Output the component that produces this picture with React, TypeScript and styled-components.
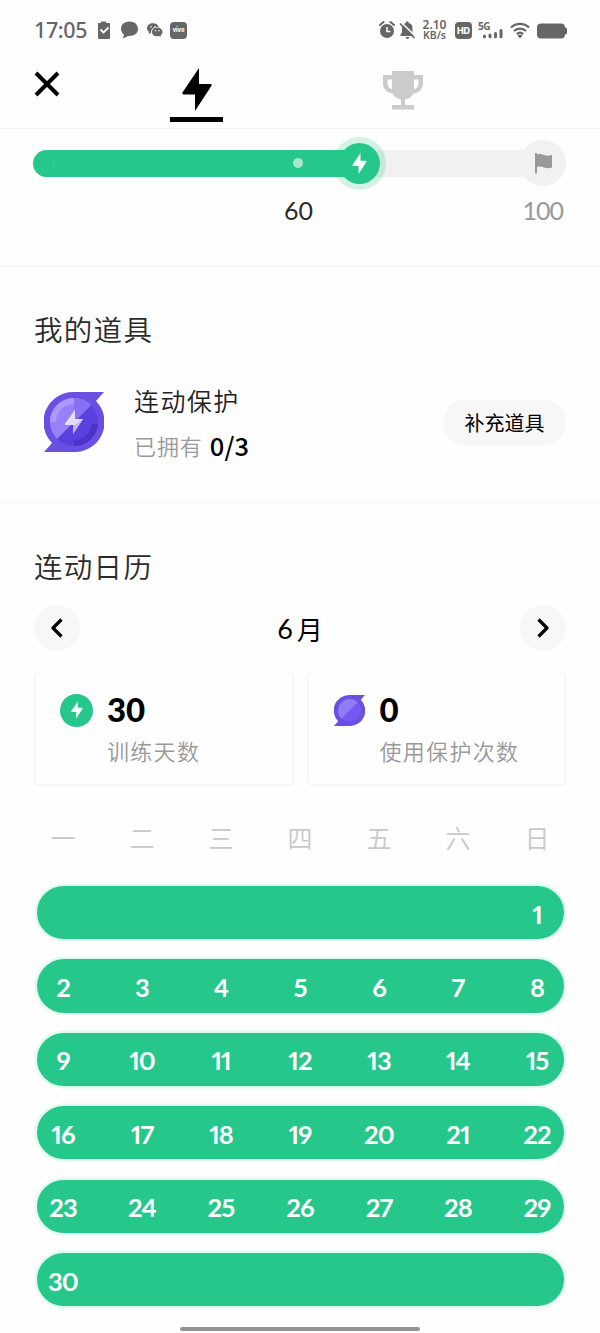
import React from 'react';
import styled, { createGlobalStyle } from 'styled-components';

const GREEN = '#26c78b';
const cjk = "'Noto Sans CJK SC', sans-serif";
const cjkSoft = "'Noto Sans CJK SC DemiLight', 'Noto Sans CJK SC', sans-serif";
const latin = "Lato, 'Noto Sans CJK SC', sans-serif";

const GlobalStyle = createGlobalStyle`
  * { box-sizing: border-box; }
  body { margin: 0; background: #fefefe; font-family: ${cjk}; color: #2b2b2b; }
  svg { display: block; flex: none; }
`;

const Screen = styled.main`
  width: 600px;
  height: 1333px;
  display: flex;
  flex-direction: column;
  overflow: hidden;
  background: #fefefe;
`;

const StatusBar = styled.header`
  height: 60px;
  padding: 0 33px 0 34px;
  display: flex;
  align-items: center;
  justify-content: space-between;
  color: #666;
`;
const StatusGroup = styled.div`
  display: flex;
  align-items: center;
`;
const Clock = styled.span`
  width: 62px;
  font: 500 21.5px/30px 'Noto Sans', sans-serif;
  letter-spacing: -0.4px;
  white-space: nowrap;
`;
const Speed = styled.div`
  width: 27px;
  margin: 0 7px 0 5px;
  display: flex;
  flex-direction: column;
  align-items: center;
  font: 600 11px/11px 'Noto Sans', sans-serif;
  white-space: nowrap;
`;
const SpeedValue = styled.span`
  height: 11px;
  font-size: 12px;
`;
const SpeedUnit = styled.span`
  height: 11px;
  font-size: 10.5px;
`;
const Badge = styled.span<{ $font: number }>`
  width: 17px;
  height: 17px;
  border-radius: 4px;
  background: #666;
  color: #fff;
  display: flex;
  align-items: center;
  justify-content: center;
  font: 800 ${p => p.$font}px/17px Inter, sans-serif;
`;
const Signal = styled.div`
  width: 26px;
  height: 18px;
  margin: 0 6px 0 6px;
  display: flex;
`;
const NetworkLabel = styled.span`
  width: 5px;
  font: 700 10px/10px 'Noto Sans', sans-serif;
  letter-spacing: -0.4px;
  white-space: nowrap;
`;
const BatterySlot = styled.div`
  margin: 1px 0 0 7px;
`;

const TabBar = styled.nav`
  height: 69px;
  padding-left: 34px;
  display: flex;
  border-bottom: 1.5px solid #f3f3f3;
`;
const CloseButton = styled.button`
  width: 26px;
  height: 26px;
  margin: 11px 60px 0 0;
  padding: 0;
  border: 0;
  background: none;
`;
const Tab = styled.div<{ $active?: boolean }>`
  width: 153px;
  height: 62px;
  display: flex;
  flex-direction: column;
  align-items: center;
  justify-content: space-between;
  padding-top: ${p => (p.$active ? 8 : 11)}px;
`;
const TabSpacer = styled.span`
  width: 53px;
`;
const Underline = styled.span`
  width: 53px;
  height: 5px;
  background: #000;
`;

const ProgressSection = styled.section`
  height: 138px;
  padding: 8px 34px 0 33px;
  border-bottom: 2px solid #f7f7f7;
`;
const ProgressRow = styled.div`
  height: 52px;
  display: flex;
  align-items: center;
`;
const Fill = styled.div`
  width: 326px;
  height: 27px;
  flex: none;
  margin-right: -26px;
  padding-right: 56px;
  border-radius: 14px 0 0 14px;
  background: ${GREEN};
  display: flex;
  align-items: center;
  justify-content: space-between;
`;
const FillSeam = styled.span`
  width: 27px;
  height: 27px;
  margin-left: 20px;
  border-radius: 50%;
  border-left: 1px solid #39cc95;
`;
const Milestone = styled.span`
  width: 10px;
  height: 10px;
  border-radius: 50%;
  background: #a4e8ce;
`;
const Knob = styled.div`
  z-index: 1;
  width: 53px;
  height: 53px;
  flex: none;
  border-radius: 50%;
  border: 6.5px solid rgba(38, 196, 137, 0.2);
  background: ${GREEN};
  background-clip: padding-box;
  display: flex;
  align-items: center;
  justify-content: center;
`;
const Track = styled.div`
  flex: 1;
  height: 27px;
  margin: 0 -4px 0 -27px;
  background: #f1f1f1;
`;
const Goal = styled.div`
  width: 46px;
  height: 46px;
  flex: none;
  border-radius: 50%;
  background: #f1f1f1;
  display: flex;
  align-items: center;
  justify-content: center;
`;
const ProgressLabels = styled.div`
  display: flex;
  justify-content: space-between;
  padding: 6px 3px 0 251px;
  font: 400 25px/30px ${latin};
  color: #2b2b2b;
`;
const GoalLabel = styled.span`
  color: #999;
  letter-spacing: -1px;
`;

const Title = styled.h2`
  margin: 0;
  font: 400 28.5px/40px ${cjkSoft};
  letter-spacing: 1.3px;
  color: #2b2b2b;
`;
const PropsSection = styled.section`
  height: 238px;
  padding: 42px 34px 0;
  border-bottom: 4px solid #fafafa;
`;
const PropRow = styled.div`
  display: flex;
  align-items: center;
  margin-top: 29px;
  height: 88px;
  padding-left: 10px;
`;
const PropInfo = styled.div`
  flex: 1;
  padding: 4px 0 0 30px;
`;
const PropName = styled.div`
  font: 400 25px/42px ${cjkSoft};
  letter-spacing: 1.4px;
  color: #222;
`;
const PropCount = styled.div`
  display: flex;
  align-items: center;
  font: 400 22px/48px ${cjkSoft};
  letter-spacing: 0.9px;
  color: #999;
`;
const CountValue = styled.span`
  margin-left: 7px;
  font: 500 25.5px/48px ${cjk};
  letter-spacing: 0.2px;
  color: #000;
`;
const RefillButton = styled.button`
  width: 123px;
  height: 47px;
  padding: 0;
  border: 0;
  border-radius: 24px;
  background: #f7f7f7;
  font: 400 20px/47px ${cjk};
  color: #000;
`;

const CalendarSection = styled.section`
  padding: 41px 34px 0;
  flex: 1;
`;
const MonthNav = styled.div`
  display: flex;
  align-items: center;
  justify-content: space-between;
  margin-top: 19px;
  height: 46px;
`;
const NavButton = styled.button`
  width: 46px;
  height: 46px;
  padding: 0;
  border: 0;
  border-radius: 50%;
  background: #f7f7f7;
  display: flex;
  align-items: center;
  justify-content: center;
`;
const Month = styled.div`
  display: flex;
  align-items: center;
  gap: 4px;
  padding-top: 2px;
  font: 400 26px/40px ${cjk};
  color: #000;
`;
const MonthNumber = styled.span`
  font: 400 27px/40px ${latin};
`;
const Stats = styled.div`
  display: grid;
  grid-template-columns: 1fr 1fr;
  gap: 13px;
  margin-top: 20px;
`;
const StatCard = styled.div`
  height: 115px;
  padding: 17px 0 0 24px;
  border: 2px solid #f7f7f7;
  border-radius: 5px;
  display: grid;
  grid-template-columns: 33px 1fr;
  grid-template-rows: 40px 42px;
  column-gap: 14px;
  align-items: center;
`;
const StatIcon = styled.div<{ $round?: boolean }>`
  width: 33px;
  height: 33px;
  border-radius: ${p => (p.$round ? '50%' : '0')};
  background: ${p => (p.$round ? GREEN : 'none')};
  display: flex;
  align-items: center;
  justify-content: center;
`;
const StatValue = styled.div`
  font: 900 33px/38px ${latin};
  padding-bottom: 2px;
  letter-spacing: -0.2px;
  color: #000;
`;
const StatLabel = styled.div`
  grid-column: 2;
  font: 400 22px/40px ${cjkSoft};
  padding-bottom: 2px;
  letter-spacing: 1.3px;
  color: #999;
`;

const Weekdays = styled.div`
  display: grid;
  grid-template-columns: repeat(7, 79px);
  margin: 31px -10px 0;
  justify-content: center;
  text-align: center;
  font: 400 25px/40px ${cjkSoft};
  color: #c8c8c8;
`;
const Weeks = styled.div`
  display: flex;
  flex-direction: column;
  gap: 20.1px;
  margin: 29px -10px 0;
`;
const Week = styled.div`
  height: 53.3px;
  margin: 0 12.5px;
  border-radius: 27px;
  background: ${GREEN};
  box-shadow: 0 0 1px 2.5px #dffaf0;
  display: grid;
  grid-template-columns: repeat(7, 79px);
  justify-content: center;
  align-items: center;
  text-align: center;
  font: 700 25.5px/30px ${latin};
  font-variant-numeric: proportional-nums;
  letter-spacing: -0.9px;
  color: #fff;
`;
const Day = styled.span`
  padding-top: 2px;
`;
const HomeIndicator = styled.div`
  width: 240px;
  height: 4px;
  margin: 0 auto 2px;
  border-radius: 2px;
  background: #929292;
`;

const Bolt = ({ w, h, color }: { w: number; h: number; color: string }) => (
  <svg width={w} height={h} viewBox="0 0 30 43" fill={color}>
    <path d="M17 0 .8 24q-1.300 2.500 1.200 2.500h11V43L29.300 18q1.200-2-1.300-2H17Z" />
  </svg>
);

const ShieldIcon = ({ size, bolt }: { size: number; bolt?: boolean }) => (
  <svg width={size} height={size} viewBox="0 0 60 60">
    <path fill="#6a50e2" d="M30 0h30l-8 9a30 30 0 0 1-22 51H0l8-9A30 30 0 0 1 30 0Z" />
    <circle cx="30" cy="30" r={bolt ? 24 : 22} fill={bolt ? '#5a40de' : '#7358f2'} />
    {bolt ? (
      <>
        <path fill="#9780f8" d="M13 47A24 24 0 0 1 47 13Z" />
        <path fill="#8870f2" d="M30 6a24 24 0 0 1 17 7L30 30Z" />
        <path fill="#ad99fb" d="M6 30A24 24 0 0 1 30 6v6a18 18 0 0 0-18 18Z" />
        <path fill="#4a33c8" d="M54 32a24 24 0 0 1-24 22v-6a18 18 0 0 0 18-16Z" />
        <path fill="#fff" d="M31 18 21 32q0 1 1 1h9Z" />
        <path fill="#e3dafc" d="M31 18v9h8L29 42v-9h-7Z" />
        <path fill="#c2b4f7" d="M31 33h-2v9l10-15Z" />
      </>
    ) : (
      <path fill="#907bf9" d="M14.4 45.6A22 22 0 0 1 45.6 14.4Z" />
    )}
  </svg>
);

const Chevron = ({ right }: { right?: boolean }) => (
  <svg width="14" height="20" viewBox="0 0 14 20" fill="none" stroke="#000" strokeWidth="3.200" strokeLinejoin="round">
    <path d={right ? 'M2.500 1.500 11 10l-8.500 8.500' : 'M11.500 1.500 3 10l8.500 8.500'} />
  </svg>
);

const NoticeIcons = () => (
  <svg width="74" height="20" viewBox="0 0 74 20" fill="#666">
    <path d="M2 3h3V1.500h5V3h3q1 0 1 1v14q0 1-1 1H3q-1 0-1-1V4Z" />
    <path d="M4.500 9.500 7.500 12.500 12.500 7.500" fill="none" stroke="#fff" strokeWidth="1.800" />
    <path d="M33.500 1.500c-5 0-8.500 3-8.500 7.300 0 2.500 1.200 4.500 3 5.700 0 1.500-.8 3-1.800 3.700 2.500 0 4-.8 5.500-2.200h1.800c5 0 8.500-3 8.500-7.200s-3.500-7.300-8.500-7.300Z" />
    <path d="M57 3.200c-3.500 0-6 2.100-6 4.900 0 1.700.8 3 2.100 3.900l-.5 2.100 2.300-1.200 2 .3c3.500 0 6-2.300 6-5s-2.500-5-5.900-5Z" />
    <ellipse cx="61.200" cy="12" rx="6.200" ry="5.300" fill="#fefefe" />
    <path d="M61.200 7.500c-3 0-5.200 2-5.200 4.400s2.200 4.400 5.200 4.400l1.800-.3 2 1-.4-1.900c1.200-.8 1.900-1.900 1.900-3.200 0-2.400-2.300-4.400-5.300-4.400Z" />
    <g fill="#fefefe">
      <circle cx="55" cy="6.800" r=".8" />
      <circle cx="59" cy="6.800" r=".8" />
      <circle cx="59.500" cy="10.700" r=".7" />
      <circle cx="63" cy="10.700" r=".7" />
    </g>
  </svg>
);

const AlarmIcons = () => (
  <svg width="37" height="20" viewBox="0 0 37 20">
    <circle cx="8" cy="11" r="7" fill="#666" />
    <path d="M1 5 4.500 2M11.500 2 15 5" stroke="#666" strokeWidth="2" strokeLinecap="round" />
    <path d="M8 7v4.500h3.500" stroke="#fff" strokeWidth="1.500" fill="none" />
    <path fill="#666" d="M21.500 16v-1.500l1.500-2V8c0-3 2-4.500 4-5V1.500h2.500V3c2.500.5 4 2 4 5v4.500l1.500 2V16ZM26.500 17h4q-.5 2-2 2t-2-2Z" />
    <path d="M22.500 2.500 37 17" stroke="#fefefe" strokeWidth="1.600" />
    <path d="M21 3.500 35.500 18" stroke="#666" strokeWidth="1.600" />
  </svg>
);

const Bars = () => (
  <svg width="20" height="18" viewBox="0 0 20 18" stroke="#666" strokeWidth="3" strokeLinecap="round">
    <path d="M1.500 15v.7M7 14v1.700M12.500 12.500v3.200M18 9.500v6.200" />
  </svg>
);

const Wifi = () => (
  <svg width="20" height="17" viewBox="0 0 20 17" fill="none" stroke="#666" strokeWidth="2.300">
    <path d="M1 5.500a13 13 0 0 1 18 0M4 9a8.700 8.700 0 0 1 12 0M6.800 12a4.700 4.700 0 0 1 6.400 0" />
    <path fill="#666" stroke="none" d="M7.500 13.500q2.500-2 5 0L10 16.500Z" />
  </svg>
);

const Battery = () => (
  <svg width="30" height="16" viewBox="0 0 30 16" fill="#666">
    <rect y=".5" width="28" height="15" rx="4" />
    <rect x="27" y="4.500" width="3" height="7" rx="1.500" />
  </svg>
);

const Trophy = () => (
  <svg width="40" height="39" viewBox="0 0 40 39" fill="#cbcbcb">
    <path d="M9 0h22v4h9v8c0 6-4 10-9.500 10.500C28.500 26 25.500 28 22 28.500V34h9v4.500H9V34h9v-5.500C14.500 28 11.500 26 9.500 22.500 4 22 0 18 0 12V4h9ZM9 8.500H4.500V12c0 3.500 1.700 5.500 4.500 6.300ZM31 8.500v9.800c2.800-.8 4.500-2.800 4.500-6.300V8.500Z" />
  </svg>
);

const Flag = () => (
  <svg width="17" height="21" viewBox="0 0 17 21" fill="#999">
    <path d="M0 0h2v20.500H0Z" />
    <path d="M2 1.500c3-1 5-.4 7 .6 2 .9 4.500.8 8 0V14.500c-3.500.8-6 .9-8 0-2-1-4-1.600-7-.6Z" />
  </svg>
);

const weekdays = ['一', '二', '三', '四', '五', '六', '日'];
const weeks = Array.from({ length: 6 }, (_, row) =>
  Array.from({ length: 7 }, (_, col) => {
    const day = row * 7 + col - 5;
    return day >= 1 && day <= 30 ? day : null;
  }),
);

export default function App() {
  return (
    <Screen>
      <GlobalStyle />
      <StatusBar>
        <StatusGroup>
          <Clock>17:05</Clock>
          <NoticeIcons />
          <Badge $font={5.5}>vivo</Badge>
        </StatusGroup>
        <StatusGroup>
          <AlarmIcons />
          <Speed>
            <SpeedValue>2.10</SpeedValue>
            <SpeedUnit>KB/s</SpeedUnit>
          </Speed>
          <Badge $font={9}>HD</Badge>
          <Signal>
            <NetworkLabel>5G</NetworkLabel>
            <Bars />
          </Signal>
          <Wifi />
          <BatterySlot><Battery /></BatterySlot>
        </StatusGroup>
      </StatusBar>

      <TabBar>
        <CloseButton aria-label="关闭">
          <svg width="26" height="26" viewBox="0 0 26 26" stroke="#000" strokeWidth="4">
            <path d="M2 2 24 24M24 2 2 24" />
          </svg>
        </CloseButton>
        <Tab $active>
          <Bolt w={30} h={43} color="#000" />
          <Underline />
        </Tab>
        <TabSpacer />
        <Tab><Trophy /></Tab>
      </TabBar>

      <ProgressSection>
        <ProgressRow>
          <Fill><FillSeam /><Milestone /></Fill>
          <Knob><Bolt w={15} h={21} color="#fff" /></Knob>
          <Track />
          <Goal><Flag /></Goal>
        </ProgressRow>
        <ProgressLabels>
          <span>60</span>
          <GoalLabel>100</GoalLabel>
        </ProgressLabels>
      </ProgressSection>

      <PropsSection>
        <Title>我的道具</Title>
        <PropRow>
          <ShieldIcon size={60} bolt />
          <PropInfo>
            <PropName>连动保护</PropName>
            <PropCount>已拥有<CountValue>0/3</CountValue></PropCount>
          </PropInfo>
          <RefillButton>补充道具</RefillButton>
        </PropRow>
      </PropsSection>

      <CalendarSection>
        <Title>连动日历</Title>
        <MonthNav>
          <NavButton aria-label="上个月"><Chevron /></NavButton>
          <Month><MonthNumber>6</MonthNumber>月</Month>
          <NavButton aria-label="下个月"><Chevron right /></NavButton>
        </MonthNav>
        <Stats>
          <StatCard>
            <StatIcon $round><Bolt w={12} h={18} color="#fff" /></StatIcon>
            <StatValue>30</StatValue>
            <StatLabel>训练天数</StatLabel>
          </StatCard>
          <StatCard>
            <StatIcon><ShieldIcon size={31} /></StatIcon>
            <StatValue>0</StatValue>
            <StatLabel>使用保护次数</StatLabel>
          </StatCard>
        </Stats>
        <Weekdays>
          {weekdays.map(d => <span key={d}>{d}</span>)}
        </Weekdays>
        <Weeks>
          {weeks.map((week, i) => (
            <Week key={i}>
              {week.map((day, j) => <Day key={j}>{day}</Day>)}
            </Week>
          ))}
        </Weeks>
      </CalendarSection>
      <HomeIndicator />
    </Screen>
  );
}
